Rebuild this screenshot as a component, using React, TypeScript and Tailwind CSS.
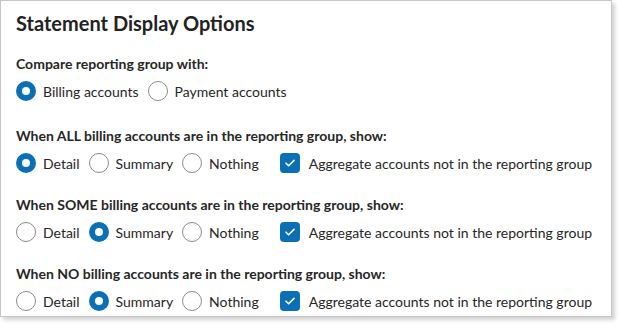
import { FC } from 'react';

const Radio: FC<{ label: string; checked?: boolean }> = ({ label, checked }) => (
  <label className="flex items-center gap-[7px] mr-[9px]">
    {checked ? (
      <span className="w-[20px] h-[20px] rounded-full bg-[#0b6fb6] flex items-center justify-center">
        <span className="w-[8px] h-[8px] rounded-full bg-white" />
      </span>
    ) : (
      <span className="w-[20px] h-[20px] rounded-full border border-[#8a8a8a] bg-white" />
    )}
    <span>{label}</span>
  </label>
);

const Check: FC<{ label: string }> = ({ label }) => (
  <label className="flex items-center gap-[9px] ml-[12px]">
    <span className="w-[20px] h-[20px] rounded-[4px] bg-[#0b6fb6] flex items-center justify-center">
      <svg width="12" height="12" viewBox="0 0 12 12" fill="none">
        <path d="M2 6.2l2.6 2.6L10 3.4" stroke="white" strokeWidth="1.6" strokeLinecap="round" strokeLinejoin="round" />
      </svg>
    </span>
    <span>{label}</span>
  </label>
);

const sections = [
  { title: 'When ALL billing accounts are in the reporting group, show:', picked: 'Detail', gap: 'mt-[25px]' },
  { title: 'When SOME billing accounts are in the reporting group, show:', picked: 'Summary', gap: 'mt-[22px]' },
  { title: 'When NO billing accounts are in the reporting group, show:', picked: 'Summary', gap: 'mt-[22px]' },
];

export default function App() {
  return (
    <div className="bg-white w-[621px] h-[331px] font-['Lato',sans-serif] text-[#262626] text-[14px]">
      <div className="w-[612px] h-[317px] border border-[#c6c6c6] shadow-[3px_3px_4px_rgba(0,0,0,0.18)] px-[15px] pt-[8px]">
        <h1 className="text-[20px] font-bold leading-[28px] text-[#222]">Statement Display Options</h1>

        <div className="mt-[18px]">
          <p className="font-bold leading-[18px]">Compare reporting group with:</p>
          <div className="flex items-center mt-[7px] h-[22px]">
            <Radio label="Billing accounts" checked />
            <Radio label="Payment accounts" />
          </div>
        </div>

        {sections.map((s) => (
          <div className={s.gap} key={s.title}>
            <p className="font-bold leading-[18px]">{s.title}</p>
            <div className="flex items-center mt-[7px] h-[22px]">
              <Radio label="Detail" checked={s.picked === 'Detail'} />
              <Radio label="Summary" checked={s.picked === 'Summary'} />
              <Radio label="Nothing" checked={s.picked === 'Nothing'} />
              <Check label="Aggregate accounts not in the reporting group" />
            </div>
          </div>
        ))}
      </div>
    </div>
  );
}
